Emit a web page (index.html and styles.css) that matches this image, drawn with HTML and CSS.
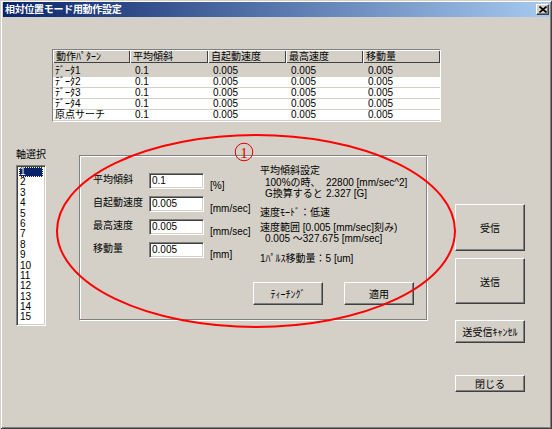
FILE: index.html
```html
<!DOCTYPE html>
<html lang="ja">
<head>
<meta charset="utf-8">
<title>相対位置モード用動作設定</title>
<link rel="stylesheet" href="styles.css">
</head>
<body>
<div class="window">
  <div class="titlebar">
    <span class="title">相対位置モード用動作設定</span>
    <span class="close"><svg width="8" height="7" viewBox="0 0 8 7"><path d="M0.5 0.5 L7.5 6.5 M7.5 0.5 L0.5 6.5" stroke="#000" stroke-width="1.6"/></svg></span>
  </div>

  <div class="grid-box">
    <table class="grid">
      <colgroup><col class="c1"><col class="c2"><col class="c3"><col class="c4"><col class="c5"></colgroup>
      <thead>
        <tr><th>動作ﾊﾟﾀｰﾝ</th><th>平均傾斜</th><th>自起動速度</th><th>最高速度</th><th>移動量</th></tr>
      </thead>
      <tbody>
        <tr class="first"><td>ﾃﾞｰﾀ1</td><td>0.1</td><td>0.005</td><td>0.005</td><td>0.005</td></tr>
        <tr><td>ﾃﾞｰﾀ2</td><td>0.1</td><td>0.005</td><td>0.005</td><td>0.005</td></tr>
        <tr><td>ﾃﾞｰﾀ3</td><td>0.1</td><td>0.005</td><td>0.005</td><td>0.005</td></tr>
        <tr><td>ﾃﾞｰﾀ4</td><td>0.1</td><td>0.005</td><td>0.005</td><td>0.005</td></tr>
        <tr><td>原点サーチ</td><td>0.1</td><td>0.005</td><td>0.005</td><td>0.005</td></tr>
      </tbody>
    </table>
  </div>

  <div class="main">
    <div class="axis">
      <div class="axis-label">軸選択</div>
      <ul class="listbox">
        <li class="sel">1</li><li>2</li><li>3</li><li>4</li><li>5</li>
        <li>6</li><li>7</li><li>8</li><li>9</li><li>10</li>
        <li>11</li><li>12</li><li>13</li><li>14</li><li>15</li>
      </ul>
    </div>

    <div class="group">
      <div class="group-top">
        <div class="form">
          <span class="lbl">平均傾斜</span><span class="input">0.1</span><span class="unit">[%]</span>
          <span class="lbl">自起動速度</span><span class="input">0.005</span><span class="unit">[mm/sec]</span>
          <span class="lbl">最高速度</span><span class="input">0.005</span><span class="unit">[mm/sec]</span>
          <span class="lbl">移動量</span><span class="input">0.005</span><span class="unit">[mm]</span>
        </div>
        <div class="info">
          <div class="line">平均傾斜設定</div>
          <div class="line l2 ind"><span class="k">100%の時、</span>22800 [mm/sec^2]</div>
          <div class="line ind"><span class="k">G換算すると</span>2.327 [G]</div>
          <div class="line l4">速度ﾓｰﾄﾞ：低速</div>
          <div class="line l5">速度範囲 [0.005 [mm/sec]刻み)</div>
          <div class="line ind">0.005 ～327.675 [mm/sec]</div>
          <div class="line l7">1ﾊﾟﾙｽ移動量：5 [um]</div>
        </div>
      </div>
      <div class="group-buttons">
        <button class="btn small">ﾃｨｰﾁﾝｸﾞ</button>
        <button class="btn small">適用</button>
      </div>
    </div>

    <div class="actions">
      <button class="btn big">受信</button>
      <button class="btn big second">送信</button>
      <button class="btn cancel">送受信ｷｬﾝｾﾙ</button>
      <button class="btn closebtn">閉じる</button>
    </div>
  </div>

  <svg class="annot" width="552" height="429" viewBox="0 0 552 429">
    <ellipse cx="256" cy="231" rx="199" ry="96" fill="none" stroke="#ff0000" stroke-width="2"/>
    <circle cx="244" cy="152" r="8.8" fill="none" stroke="#e00000" stroke-width="1"/>
    <text x="244" y="158" text-anchor="middle" font-size="15" fill="#e00000" font-family="Liberation Serif, serif">1</text>
  </svg>
</div>
</body>
</html>
```
FILE: styles.css
```css
html, body {
  margin: 0;
  padding: 0;
  background: #d4d0c8;
}

body {
  font-family: "Liberation Sans", "Noto Sans CJK JP", sans-serif;
  font-size: 10px;
  color: #000;
}

.window {
  position: relative;
  width: 552px;
  height: 429px;
  box-sizing: border-box;
  background: #d4d0c8;
  box-shadow: inset 1px 1px 0 #d4d0c8, inset -1px -1px 0 #404040,
              inset 2px 2px 0 #ffffff, inset -2px -2px 0 #808080;
  overflow: hidden;
}

.titlebar {
  margin: 2px 2px 0 3px;
  height: 15px;
  display: flex;
  align-items: center;
  justify-content: space-between;
  padding: 0 1px 0 2px;
  background: linear-gradient(to right, #0a246a, #a6caf0);
}

.title {
  color: #fff;
  font-weight: bold;
  font-size: 10px;
  line-height: 15px;
  letter-spacing: -0.3px;
}

.close {
  width: 13px;
  height: 11px;
  box-sizing: border-box;
  background: #d4d0c8;
  border: 1px solid;
  border-color: #fff #404040 #404040 #fff;
  box-shadow: inset -1px -1px 0 #808080;
  display: flex;
  align-items: center;
  justify-content: center;
}

.close svg { display: block; }

/* table */
.grid-box {
  margin: 32px 0 0 52px;
  width: 389px;
  box-sizing: border-box;
  border: 1px solid;
  border-color: #808080 #fff #fff #808080;
  background: #fff;
}

.grid {
  border-collapse: separate;
  border-spacing: 0;
  table-layout: fixed;
  width: 387px;
  font-size: 10px;
}

.c1 { width: 77px; }
.c2 { width: 78px; }
.c3 { width: 78px; }
.c4 { width: 77px; }
.c5 { width: 77px; }

.grid th {
  height: 13px;
  padding: 0 0 0 3px;
  line-height: 13px;
  text-align: left;
  font-weight: normal;
  background: #d4d0c8;
  box-shadow: inset 1px 1px 0 #fff, inset -1px -1px 0 #404040;
  white-space: nowrap;
}

.grid td {
  height: 10px;
  padding: 0 0 0 5px;
  line-height: 10px;
  border-bottom: 1px solid #d4d0c8;
  white-space: nowrap;
  background: #fff;
}

.grid td:first-child { padding-left: 2px; }

.grid tr.first td {
  height: 13px;
  background: #d4d0c8;
  vertical-align: bottom;
  line-height: 11px;
}

/* main area */
.main {
  display: flex;
  align-items: flex-start;
  margin-top: 27px;
}

.axis {
  margin-left: 16px;
  width: 30px;
}

.axis-label {
  line-height: 12px;
  white-space: nowrap;
}

.listbox {
  list-style: none;
  margin: 4px 0 0;
  width: 30px;
  height: 161px;
  box-sizing: border-box;
  padding: 1px 2px 0 2px;
  background: #fff;
  border: 1px solid;
  border-color: #808080 #fff #fff #808080;
  box-shadow: inset 1px 1px 0 #404040, inset -1px -1px 0 #d4d0c8;
}

.listbox li {
  height: 10.4px;
  line-height: 10.4px;
  padding-left: 1px;
}

.listbox li.sel {
  background: #0a246a;
  color: #fff;
  outline: 1px dotted #ffff99;
  outline-offset: -1px;
}

/* group box */
.group {
  box-sizing: border-box;
  width: 348px;
  height: 165px;
  margin: 6px 0 0 33px;
  border: 1px solid #808080;
  box-shadow: 1px 1px 0 #fff, inset 1px 1px 0 #fff;
  padding: 9px 12px 14px 13px;
  display: flex;
  flex-direction: column;
}

.group-top {
  display: flex;
  align-items: flex-start;
}

.form {
  flex: none;
  width: 167px;
  margin-top: 8px;
  display: grid;
  grid-template-columns: 56px 55px 56px;
  grid-auto-rows: 16px;
  row-gap: 7px;
}

.lbl {
  line-height: 11px;
  margin-top: 1px;
  white-space: nowrap;
}

.input {
  box-sizing: border-box;
  height: 16px;
  background: #fff;
  border: 1px solid;
  border-color: #808080 #fff #fff #808080;
  box-shadow: inset 1px 1px 0 #404040, inset -1px -1px 0 #d4d0c8;
  padding-left: 2px;
  line-height: 14px;
}

.unit {
  align-self: end;
  line-height: 11px;
  margin: 0 0 -2px 6px;
  white-space: nowrap;
}

.info {
  line-height: 11px;
  white-space: nowrap;
}

.info .ind { padding-left: 5px; }
.info .l2 { margin-top: 1px; }
.info .l4 { margin-top: 8px; }
.info .l5 { margin-top: 4px; }
.info .l7 { margin-top: 9px; }

.info .k {
  display: inline-block;
  width: 61px;
}

.group-buttons {
  margin-top: auto;
  display: flex;
  justify-content: flex-end;
  gap: 21px;
}

/* buttons */
.btn {
  box-sizing: border-box;
  width: 70px;
  margin: 0;
  padding: 0;
  background: #d4d0c8;
  border: 1px solid;
  border-color: #fff #404040 #404040 #fff;
  box-shadow: inset -1px -1px 0 #808080;
  font-family: "Liberation Sans", "Noto Sans CJK JP", sans-serif;
  font-size: 10px;
  color: #000;
  display: flex;
  align-items: center;
  justify-content: center;
  white-space: nowrap;
}

.btn.small { height: 23px; }

.actions {
  margin: 55px 0 0 28px;
  display: flex;
  flex-direction: column;
}

.btn.big { height: 47px; }
.btn.big.second { margin-top: 7px; height: 46px; }
.btn.cancel { margin-top: 16px; height: 23px; }
.btn.closebtn { margin-top: 32px; height: 17px; }

/* annotation overlay */
.annot {
  position: absolute;
  left: 0;
  top: 0;
  pointer-events: none;
}
```
